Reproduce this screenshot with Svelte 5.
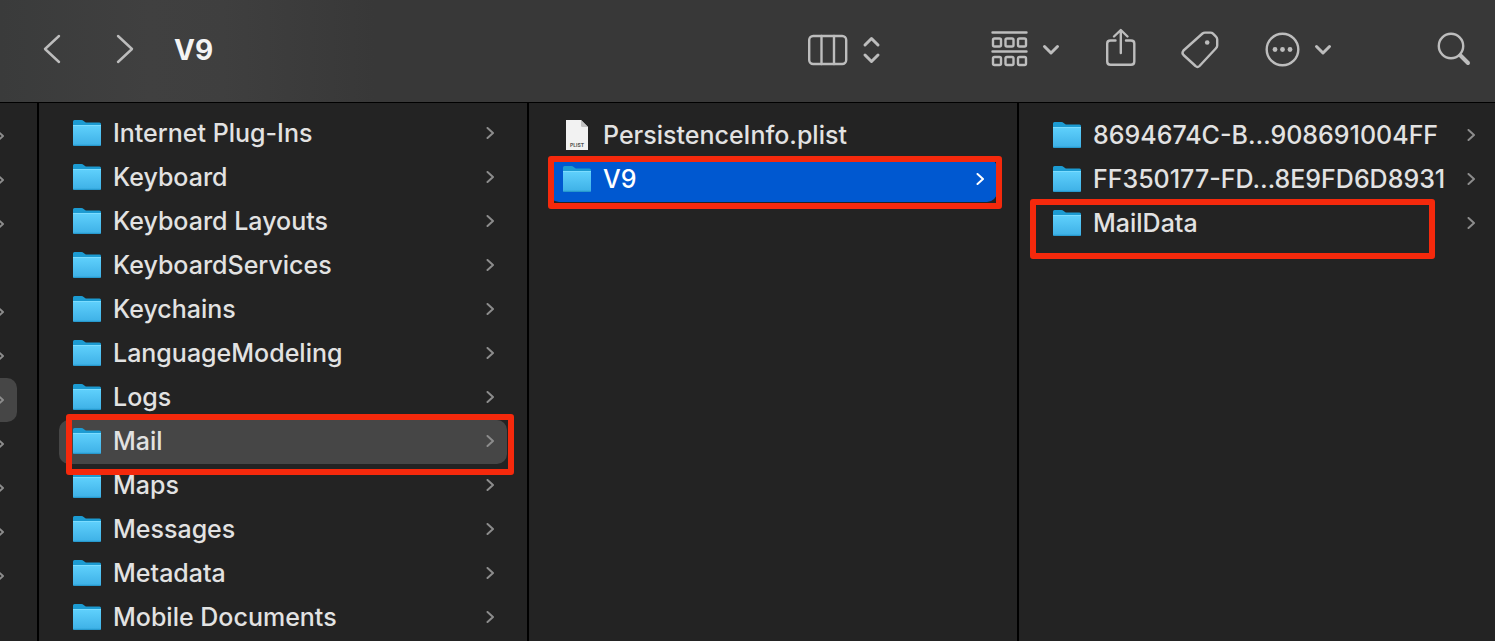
<script lang="ts">
    type Item = { name: string; kind?: string; selected?: string; mark?: string };

    // parent column is scrolled almost out of view, only its arrows show
    const parents = [true, true, true, false, true, true, true, true, true, true, true];
    const openParent = 6;

    const library: Item[] = [
        { name: "Internet Plug-Ins" },
        { name: "Keyboard" },
        { name: "Keyboard Layouts" },
        { name: "KeyboardServices" },
        { name: "Keychains" },
        { name: "LanguageModeling" },
        { name: "Logs" },
        { name: "Mail", selected: "inactive", mark: "mark-mail" },
        { name: "Maps" },
        { name: "Messages" },
        { name: "Metadata" },
        { name: "Mobile Documents" },
    ];
    const mail: Item[] = [
        { name: "PersistenceInfo.plist", kind: "plist" },
        { name: "V9", selected: "active", mark: "mark-v9" },
    ];
    const v9: Item[] = [
        { name: "8694674C-B…908691004FF" },
        { name: "FF350177-FD…8E9FD6D8931" },
        { name: "MailData", mark: "mark-maildata" },
    ];
</script>

{#snippet arrow()}
    <svg class="arrow" width="8" height="12" viewBox="0 0 8 12"><path d="M1.500 1 7 6 1.500 11" /></svg>
{/snippet}

{#snippet folder()}
    <svg class="icon" width="28" height="26" viewBox="0 0 28 26">
        <path d="M0 1.5Q0 0 1.5 0H8.500Q9.700 0 10.700 .9L12 2Q12.700 2.600 14 2.600H26.500Q28 2.600 28 4.100V12H0z" fill="#1c9bd2" />
        <path d="M0 5.500H28V24.500Q28 26 26.500 26H1.500Q0 26 0 24.500z" fill="url(#folder-front)" />
        <path d="M0 5.500H28" stroke="#7bdcff" />
        <path d="M.5 25.300H27.500" stroke="#2294c9" />
    </svg>
{/snippet}

{#snippet plist()}
    <svg class="icon" width="28" height="30" viewBox="0 0 28 30">
        <path d="M3 0H18L25 7V30H3z" fill="#f2f2f2" />
        <path d="M18 0 25 7H19.500Q18 7 18 5.500z" fill="#c4c4c4" />
        <text x="14" y="26.500" text-anchor="middle" class="badge">PLIST</text>
    </svg>
{/snippet}

{#snippet column(items: Item[], label: string)}
    <ul aria-label={label}>
        {#each items as item}
            <li>
                <button class="row {item.selected ?? ''}">
                    {#if item.kind === "plist"}
                        {@render plist()}
                    {:else}
                        {@render folder()}
                    {/if}
                    <span class="name">{item.name}</span>
                    {#if item.kind !== "plist"}
                        {@render arrow()}
                    {/if}
                </button>
                {#if item.mark}
                    <div class="mark {item.mark}"></div>
                {/if}
            </li>
        {/each}
    </ul>
{/snippet}

<svg class="defs" width="0" height="0" aria-hidden="true">
    <linearGradient id="folder-front" x1="0" y1="0" x2="0" y2="1">
        <stop offset="0" stop-color="#5fd0fc" />
        <stop offset="1" stop-color="#3db0e6" />
    </linearGradient>
</svg>

<div class="window">
    <header>
        <button aria-label="Back">
            <svg width="18" height="44" viewBox="0 0 18 44"><path d="M16 8 2 21 16 34" /></svg>
        </button>
        <button class="forward" aria-label="Forward">
            <svg width="18" height="44" viewBox="0 0 18 44"><path d="M2 8 16 21 2 34" /></svg>
        </button>
        <h1>V9</h1>

        <div class="tools">
            <button class="view" aria-label="View as columns">
                <svg width="72" height="44" viewBox="0 0 72 44">
                    <rect x="1.200" y="8" width="37" height="28" rx="4" />
                    <path d="M13.500 8V36M26 8V36" />
                    <path class="bold" d="M57 17 63.500 10.500 70 17M57 27 63.500 33.500 70 27" />
                </svg>
            </button>
            <button class="group" aria-label="Group items">
                <svg width="70" height="44" viewBox="0 0 70 44">
                    <path d="M2.500 4.500H36.500M2.500 23.500H36.500" />
                    {#each [3, 15.5, 28] as x}
                        <rect {x} y="10.500" width="8" height="8" rx="1.500" />
                        <rect {x} y="29" width="8" height="8" rx="1.500" />
                    {/each}
                    <path class="bold" d="M54.500 18.500 61 25 67.500 18.500" />
                </svg>
            </button>
            <button aria-label="Share">
                <svg width="30" height="44" viewBox="0 0 30 44">
                    <path d="M9.500 12.500H4.500Q1.200 12.500 1.200 15.500V33.500Q1.200 36.800 4.500 36.800H25Q28.300 36.800 28.300 33.500V15.500Q28.300 12.500 25 12.500H20" />
                    <path d="M14.800 25V2.500M8 8.500 14.800 2 21.500 8.500" />
                </svg>
            </button>
            <button aria-label="Edit tags">
                <svg width="38" height="44" viewBox="0 0 38 44">
                    <path d="M20.500 5.500Q21.500 4.600 23 4.600H28.500Q30 4.600 31 5.600L34 8.600Q35.200 9.700 35.200 11.500V17.500Q35.200 19 34 20.200L17.500 38Q15.500 40 13.500 38L1.500 27Q-.5 25 1.500 22.500z" />
                    <circle class="dot" cx="25.200" cy="14.500" r="2.300" />
                </svg>
            </button>
            <button aria-label="More actions">
                <svg width="66" height="44" viewBox="0 0 66 44">
                    <circle cx="16.500" cy="21.500" r="15.800" />
                    <circle class="dot" cx="9" cy="21.500" r="2.400" />
                    <circle class="dot" cx="16.500" cy="21.500" r="2.400" />
                    <circle class="dot" cx="24" cy="21.500" r="2.400" />
                    <path class="bold" d="M50.500 18.500 57 25 63.500 18.500" />
                </svg>
            </button>
            <button class="search" aria-label="Search">
                <svg width="34" height="44" viewBox="0 0 34 44">
                    <circle cx="15" cy="18" r="12.200" />
                    <path class="handle" d="M24.500 27.500 32 35" />
                </svg>
            </button>
        </div>
    </header>

    <main>
        <ul class="parents" aria-label="Parent folders">
            {#each parents as isFolder, i}
                <li>
                    <button class="row" class:inactive={i === openParent} aria-label="Parent folder {i + 1}">
                        {#if isFolder}
                            {@render arrow()}
                        {/if}
                    </button>
                </li>
            {/each}
        </ul>
        <div class="column first">{@render column(library, "Library")}</div>
        <div class="column">{@render column(mail, "Mail")}</div>
        <div class="column last">{@render column(v9, "V9")}</div>
    </main>
</div>

<style>
    :global(body) {
        margin: 0;
        background: #232323;
    }
    .defs {
        position: absolute;
    }
    .window {
        min-height: 100vh;
        display: flex;
        flex-direction: column;
        overflow: hidden;
        background: #232323;
        color: #e2e2e2;
        font-family: Inter, "Liberation Sans", sans-serif;
    }
    button {
        display: flex;
        padding: 0;
        border: none;
        background: none;
        color: inherit;
        font: inherit;
        text-align: left;
    }
    header {
        display: flex;
        align-items: center;
        padding: 28px 25px 30px 43px;
        border-bottom: 1px solid #000;
        background: linear-gradient(90deg, #3a3b3b 0, #404040 10%, #3f3f3f 15%, #383838 25%, #383838 100%);
    }
    header svg {
        overflow: visible;
        fill: none;
        stroke: #bdbdbd;
        stroke-width: 2.4;
        stroke-linecap: round;
        stroke-linejoin: round;
    }
    header svg .bold {
        stroke-width: 3;
    }
    header svg .handle {
        stroke-width: 4;
    }
    header svg .dot {
        fill: #bdbdbd;
        stroke: none;
    }
    .forward {
        margin-left: 55px;
    }
    h1 {
        margin: 0 0 0 40px;
        color: #f4f4f4;
        font-size: 28px;
        line-height: 44px;
        font-weight: 700;
    }
    .tools {
        margin-left: auto;
        display: flex;
        gap: 46px;
    }
    .group {
        margin-left: 64px;
    }
    .search {
        margin-left: 58px;
    }
    main {
        flex: 1;
        display: grid;
        grid-template-columns: 39px 490fr 490fr 476fr;
    }
    ul {
        margin: 0;
        padding: 11px 20px 0 20px;
        list-style: none;
    }
    .parents {
        padding: 11px 20px 0 0;
        border-right: 2px solid #000;
    }
    .column {
        min-width: 0;
        border-right: 2px solid #000;
    }
    .first ul {
        padding-top: 9px;
    }
    .last {
        border-right: none;
    }
    .last ul {
        padding-right: 7px;
    }
    li {
        position: relative;
    }
    .row {
        width: 100%;
        height: 44px;
        align-items: center;
        padding: 0 13px 2px 14px;
        border-radius: 10px;
        font-size: 25px;
        font-weight: 500;
        line-height: 42px;
    }
    .parents .row {
        justify-content: flex-end;
        padding: 0 13px 0 0;
        border-radius: 0 10px 10px 0;
    }
    .inactive {
        background: #464646;
    }
    .active {
        background: #0058d0;
        color: #fff;
    }
    .icon {
        flex: none;
        margin-right: 12px;
    }
    .badge {
        fill: #555;
        font-size: 5px;
        font-weight: 700;
    }
    .name {
        flex: 1;
        white-space: nowrap;
    }
    .arrow {
        flex: none;
        fill: none;
        stroke: #8c8c8c;
        stroke-width: 2;
        stroke-linecap: round;
        stroke-linejoin: round;
    }
    .active .arrow {
        stroke: #fff;
    }
    /* red highlight frames drawn over the list */
    .mark {
        position: absolute;
        z-index: 1;
        border: 6px solid #f5290c;
        border-radius: 3px;
        pointer-events: none;
    }
    .mark-mail {
        inset: -6px -7px -11px 7px;
    }
    .mark-v9 {
        inset: -2px -5px -7px -1px;
    }
    .mark-maildata {
        inset: -3px 53px -13px -9px;
    }
</style>
